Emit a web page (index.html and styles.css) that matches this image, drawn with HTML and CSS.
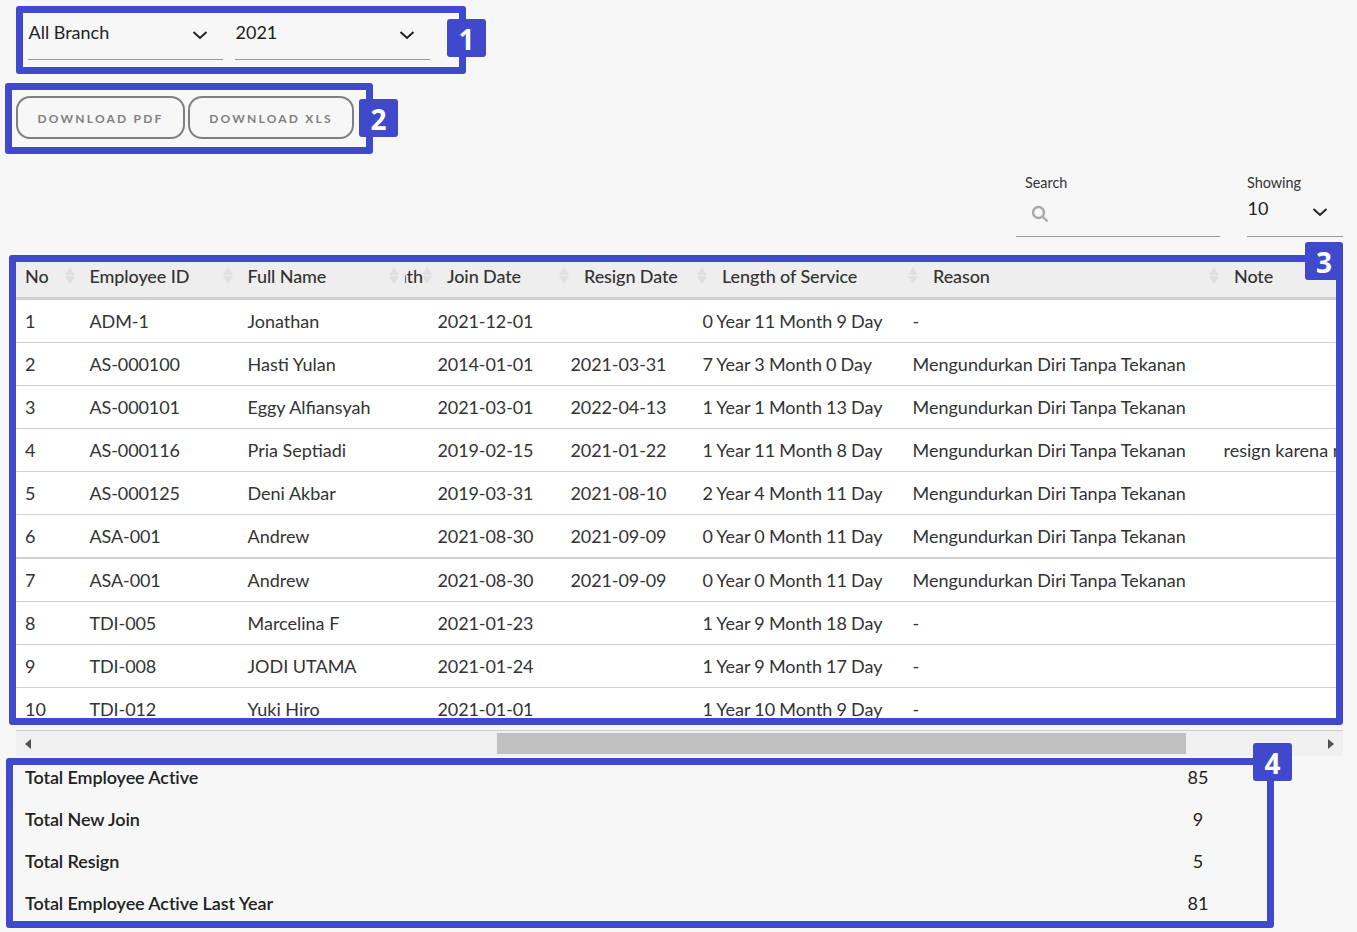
FILE: index.html
```html
<!DOCTYPE html>
<html>
<head>
  <meta charset="utf-8">
  <link rel="stylesheet" href="styles.css">
  <title>Employee Turnover Report</title>
</head>
<body>
  <div class="filters">
    <div class="select select-filter">
      <span>All Branch</span>
      <svg class="chevron" viewBox="0 0 16 10"><path d="M1.5 2 L8 8 L14.5 2"/></svg>
    </div>
    <div class="select select-filter">
      <span>2021</span>
      <svg class="chevron" viewBox="0 0 16 10"><path d="M1.5 2 L8 8 L14.5 2"/></svg>
    </div>
  </div>

  <div class="actions">
    <button class="btn btn-pdf">DOWNLOAD PDF</button>
    <button class="btn btn-xls">DOWNLOAD XLS</button>
  </div>

  <div class="toolbar">
    <div class="search">
      <label>Search</label>
      <div class="search-input">
        <svg class="search-icon" viewBox="0 0 18 18"><circle cx="7.5" cy="7.5" r="5.5"/><path d="M11.5 11.5 L16.5 16.5"/></svg>
      </div>
    </div>
    <div class="showing">
      <label>Showing</label>
      <div class="select select-small">
        <span>10</span>
        <svg class="chevron" viewBox="0 0 16 10"><path d="M1.5 2 L8 8 L14.5 2"/></svg>
      </div>
    </div>
  </div>

  <div class="table-wrap">
    <table class="table-head">
      <colgroup>
        <col class="h-no"><col class="h-id"><col class="h-name"><col class="h-hidden"><col class="h-join"><col class="h-resign"><col class="h-length"><col class="h-reason"><col class="h-note">
      </colgroup>
      <thead>
        <tr>
          <th>No<span class="sort"></span></th>
          <th>Employee ID<span class="sort"></span></th>
          <th>Full Name<span class="sort"></span></th>
          <th class="clipped"><div class="clip-text"><span>Month</span></div><span class="sort"></span></th>
          <th>Join Date<span class="sort"></span></th>
          <th>Resign Date<span class="sort"></span></th>
          <th>Length of Service<span class="sort"></span></th>
          <th>Reason<span class="sort"></span></th>
          <th>Note</th>
        </tr>
      </thead>
    </table>
    <table class="table-body">
      <colgroup>
        <col class="b-no"><col class="b-id"><col class="b-name"><col class="b-join"><col class="b-resign"><col class="b-length"><col class="b-reason"><col class="b-note">
      </colgroup>
      <tbody>
        <tr><td>1</td><td>ADM-1</td><td>Jonathan</td><td>2021-12-01</td><td></td><td>0 Year 11 Month 9 Day</td><td>-</td><td></td></tr>
        <tr><td>2</td><td>AS-000100</td><td>Hasti Yulan</td><td>2014-01-01</td><td>2021-03-31</td><td>7 Year 3 Month 0 Day</td><td>Mengundurkan Diri Tanpa Tekanan</td><td></td></tr>
        <tr><td>3</td><td>AS-000101</td><td>Eggy Alfiansyah</td><td>2021-03-01</td><td>2022-04-13</td><td>1 Year 1 Month 13 Day</td><td>Mengundurkan Diri Tanpa Tekanan</td><td></td></tr>
        <tr><td>4</td><td>AS-000116</td><td>Pria Septiadi</td><td>2019-02-15</td><td>2021-01-22</td><td>1 Year 11 Month 8 Day</td><td>Mengundurkan Diri Tanpa Tekanan</td><td>resign karena mengundurkan diri</td></tr>
        <tr><td>5</td><td>AS-000125</td><td>Deni Akbar</td><td>2019-03-31</td><td>2021-08-10</td><td>2 Year 4 Month 11 Day</td><td>Mengundurkan Diri Tanpa Tekanan</td><td></td></tr>
        <tr class="row-tall"><td>6</td><td>ASA-001</td><td>Andrew</td><td>2021-08-30</td><td>2021-09-09</td><td>0 Year 0 Month 11 Day</td><td>Mengundurkan Diri Tanpa Tekanan</td><td></td></tr>
        <tr><td>7</td><td>ASA-001</td><td>Andrew</td><td>2021-08-30</td><td>2021-09-09</td><td>0 Year 0 Month 11 Day</td><td>Mengundurkan Diri Tanpa Tekanan</td><td></td></tr>
        <tr><td>8</td><td>TDI-005</td><td>Marcelina F</td><td>2021-01-23</td><td></td><td>1 Year 9 Month 18 Day</td><td>-</td><td></td></tr>
        <tr><td>9</td><td>TDI-008</td><td>JODI UTAMA</td><td>2021-01-24</td><td></td><td>1 Year 9 Month 17 Day</td><td>-</td><td></td></tr>
        <tr><td>10</td><td>TDI-012</td><td>Yuki Hiro</td><td>2021-01-01</td><td></td><td>1 Year 10 Month 9 Day</td><td>-</td><td></td></tr>
      </tbody>
    </table>
  </div>

  <div class="scrollbar">
    <span class="arrow arrow-left"></span>
    <div class="scroll-track"><div class="scroll-thumb"></div></div>
    <span class="arrow arrow-right"></span>
  </div>

  <div class="totals">
    <div class="total-row"><span>Total Employee Active</span><span class="total-value">85</span></div>
    <div class="total-row"><span>Total New Join</span><span class="total-value">9</span></div>
    <div class="total-row"><span>Total Resign</span><span class="total-value">5</span></div>
    <div class="total-row"><span>Total Employee Active Last Year</span><span class="total-value">81</span></div>
  </div>

  <!-- numbered callouts drawn over the page -->
  <div class="callout callout-1"></div>
  <div class="badge badge-1">1</div>
  <div class="callout callout-2"></div>
  <div class="badge badge-2">2</div>
  <div class="callout callout-3"></div>
  <div class="badge badge-3">3</div>
  <div class="callout callout-4"></div>
  <div class="badge badge-4">4</div>
</body>
</html>
```

FILE: styles.css
```css
/* Employee turnover report */
html, body {
  height: 100%;
}

body {
  margin: 0;
  overflow: hidden;
  position: relative;
  background-color: #f7f7f7;
  font-family: Lato, "Liberation Sans", sans-serif;
  font-size: 18px;
  color: #333;
}

.filters {
  display: flex;
  gap: 12px;
  padding: 10px 0 0 28px;
}

.select {
  display: flex;
  justify-content: space-between;
  box-sizing: border-box;
  border-bottom: 1px solid #999;
  color: #222;
}

.select-filter {
  width: 195px;
  height: 50px;
  padding: 11px 15px 0 0.5px;
}

.chevron {
  width: 16px;
  height: 10px;
  margin-top: 9px;
  fill: none;
  stroke: #222;
  stroke-width: 2;
}

.actions {
  display: flex;
  gap: 3px;
  margin-top: 36px;
  padding-left: 16px;
}

.btn {
  height: 43px;
  padding: 1px 0 0;
  border: 2px solid #808080;
  border-radius: 14px;
  background: transparent;
  font-family: Lato, "Liberation Sans", sans-serif;
  font-size: 12px;
  font-weight: 700;
  letter-spacing: 2.2px;
  color: #808080;
}

.btn-pdf {
  width: 169px;
}

.btn-xls {
  width: 166px;
}

.toolbar {
  display: flex;
  justify-content: flex-end;
  gap: 27px;
  margin-top: 35px;
  padding-right: 14px;
}

.toolbar label {
  display: block;
  height: 18px;
  font-size: 14.4px;
  line-height: 18px;
  color: #333;
}

.search {
  width: 204px;
}

.search label {
  padding-left: 9px;
}

.search-input {
  box-sizing: border-box;
  height: 45px;
  padding: 13px 0 0 14.5px;
  border-bottom: 1px solid #999;
}

.search-icon {
  display: block;
  width: 18px;
  height: 18px;
  fill: none;
  stroke: #aaa;
  stroke-width: 2.4;
}

.showing {
  width: 96px;
}

.select-small {
  height: 45px;
  padding: 5px 15px 0 0.5px;
}

.select-small .chevron {
  margin-top: 10px;
}

.table-wrap {
  width: 1320px;
  height: 456px;
  margin: 25px 0 0 16px;
  overflow: hidden;
  background-color: #fff;
}

table {
  border-collapse: separate;
  border-spacing: 0;
  table-layout: fixed;
  white-space: nowrap;
}

.table-head {
  width: 1500px;
}

.table-head th {
  position: relative;
  box-sizing: border-box;
  height: 38px;
  padding: 0 0 7px 9px;
  background-color: #eee;
  border-bottom: 3px solid #d0d0d0;
  font-weight: 500;
  letter-spacing: -0.1px;
  text-align: left;
  color: #333;
}

.table-head .clipped {
  padding: 0 15px 7px 0;
}

.clip-text {
  display: flex;
  justify-content: flex-end;
  overflow: hidden;
}

.sort {
  position: absolute;
  top: 5px;
  right: 6px;
  width: 10px;
  height: 20px;
}

.sort::before,
.sort::after {
  content: "";
  display: block;
  border-left: 5px solid transparent;
  border-right: 5px solid transparent;
}

.sort::before {
  border-bottom: 8px solid #e0e0e0;
  margin-bottom: 1px;
}

.sort::after {
  border-top: 8px solid #e0e0e0;
}

.h-no { width: 64.5px; }
.h-id { width: 158px; }
.h-name { width: 166.5px; }
.h-hidden { width: 33px; }
.h-join { width: 137px; }
.h-resign { width: 138px; }
.h-length { width: 211px; }
.h-reason { width: 301px; }
.h-note { width: 291px; }

.table-body {
  width: 1500px;
}

.table-body td {
  box-sizing: border-box;
  height: 43px;
  padding: 0 0 0 9px;
  border-bottom: 1px solid #d0d0d0;
  overflow: hidden;
}

.table-body td:nth-child(2),
.table-body td:nth-child(4),
.table-body td:nth-child(5) {
  letter-spacing: -0.1px;
}

.table-body td:nth-child(6) {
  word-spacing: -0.5px;
}

.table-body .row-tall td {
  height: 44px;
  border-bottom-width: 2px;
}

.b-no { width: 64.5px; }
.b-id { width: 158px; }
.b-name { width: 190px; }
.b-join { width: 133px; }
.b-resign { width: 132px; }
.b-length { width: 210px; }
.b-reason { width: 311px; }
.b-note { width: 301.5px; }

.scrollbar {
  display: flex;
  align-items: center;
  box-sizing: border-box;
  width: 1327px;
  height: 26px;
  margin: 12px 0 0 16px;
  padding: 0 9px;
  border-top: 1px solid #ccc;
  background-color: #f0f0f0;
}

.arrow {
  width: 0;
  height: 0;
  border-top: 5.5px solid transparent;
  border-bottom: 5.5px solid transparent;
}

.arrow-left {
  border-right: 6px solid #505050;
}

.arrow-right {
  border-left: 6px solid #505050;
}

.scroll-track {
  flex: 1;
  padding: 0 142px 0 466px;
}

.scroll-thumb {
  height: 21px;
  background-color: #c0c0c0;
}

.totals {
  margin-top: 0;
  padding-left: 25px;
}

.total-row {
  display: grid;
  grid-template-columns: 1143px 60px;
  align-items: center;
  height: 42px;
  font-weight: 600;
  letter-spacing: -0.1px;
  color: #222;
}

.total-value {
  font-weight: 400;
  letter-spacing: 0;
  text-align: center;
}

/* callouts lie over the page */
.callout {
  position: absolute;
  box-sizing: border-box;
  border: 7px solid #4048cc;
  border-radius: 3px;
}

.callout-1 { left: 16px; top: 6px; width: 450px; height: 68px; }
.callout-2 { left: 5px; top: 83px; width: 368px; height: 71px; }
.callout-3 { left: 9px; top: 255px; width: 1334px; height: 470px; }
.callout-4 { left: 6px; top: 758px; width: 1268px; height: 170px; }

.badge {
  position: absolute;
  width: 39px;
  height: 38px;
  border-radius: 3px;
  background-color: #4048cc;
  font-family: "Open Sans", sans-serif;
  font-size: 28px;
  font-weight: 700;
  line-height: 40px;
  text-align: center;
  color: #fff;
}

.badge-1 { left: 447px; top: 19px; }
.badge-2 { left: 359px; top: 99px; }
.badge-3 { left: 1305px; top: 242px; width: 38px; }
.badge-4 { left: 1253px; top: 743px; }
```
